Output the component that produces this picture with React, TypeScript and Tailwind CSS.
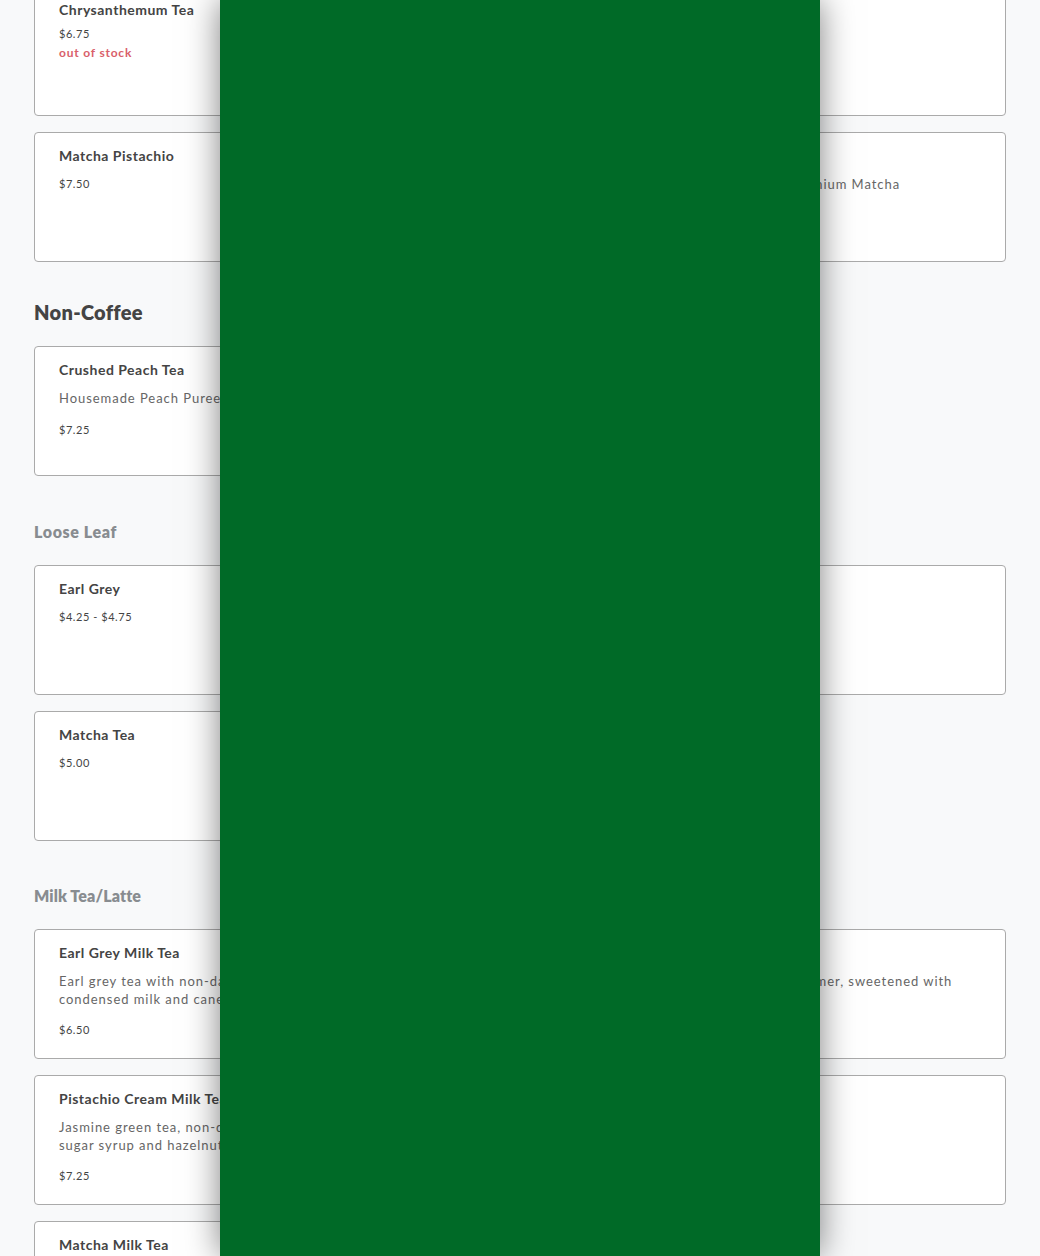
type Item = { name: string; price: string; desc?: string; stock?: boolean };

function Card({ item }: { item: Item }) {
  return (
    <div className="h-[130px] rounded border border-[#aaaaaa] bg-white px-6 pt-[15px] text-[#444444]">
      <h3 className="mb-3 h-4 whitespace-nowrap text-[14px] leading-4 font-bold tracking-[0.5px] text-[#444444]">{item.name}</h3>
      {item.desc && (
        <p className="mb-[14px] max-w-[410px] text-[13px] leading-[17.5px] tracking-[0.95px] text-[#666666]">{item.desc}</p>
      )}
      <p className={`text-[11px] leading-4 tracking-[0.55px] text-[#444444] ${item.stock ? "-mt-1" : ""}`}>{item.price}</p>
      {item.stock && <p className="mt-[3px] text-[12px] leading-4 font-bold tracking-[0.8px] text-[#d9606a]">out of stock</p>}
    </div>
  );
}

function Grid({ items }: { items: Item[] }) {
  return (
    <div className="grid grid-cols-2 gap-4">
      {items.map((item) => (
        <Card key={item.name} item={item} />
      ))}
    </div>
  );
}

export default function App() {
  return (
    <div className="relative h-screen overflow-hidden bg-[#f8f9fa] font-['Lato',sans-serif]">
      <main className="-mt-[14px] px-[34px]">
        <Grid
          items={[
            { name: "Chrysanthemum Tea", price: "$6.75", stock: true },
            { name: "Jasmine Tea", price: "$6.25" },
            { name: "Matcha Pistachio", price: "$7.50" },
            { name: "Matcha Limeade", price: "$7.25", desc: "Ceremonial Grade Limeade with Uji Premium Matcha" },
          ]}
        />
        <h2 className="mt-9 mb-5 text-[20px] leading-7 font-extrabold tracking-[0.3px] text-[#444444]">Non-Coffee</h2>
        <Grid items={[{ name: "Crushed Peach Tea", price: "$7.25", desc: "Housemade Peach Puree" }]} />
        <h2 className="mt-11 mb-[21px] text-[16px] leading-6 font-extrabold tracking-[0.6px] text-[#888c90]">Loose Leaf</h2>
        <Grid
          items={[
            { name: "Earl Grey", price: "$4.25 - $4.75" },
            { name: "Jasmine Green", price: "$4.25 - $4.75" },
            { name: "Matcha Tea", price: "$5.00" },
          ]}
        />
        <h2 className="mt-[43px] mb-[21px] text-[16px] leading-6 font-extrabold tracking-[0.1px] text-[#888c90]">Milk Tea/Latte</h2>
        <Grid
          items={[
            { name: "Earl Grey Milk Tea", price: "$6.50", desc: "Earl grey tea with non-dairy creamer, sweetened with condensed milk and cane sugar" },
            { name: "Jasmine Milk Tea", price: "$6.50", desc: "Jasmine green tea with a non-dairy creamer, sweetened with condensed milk" },
            { name: "Pistachio Cream Milk Tea", price: "$7.25", desc: "Jasmine green tea, non-dairy creamer, pistachio cream, cane sugar syrup and hazelnut cream" },
            { name: "Hazelnut Milk Tea", price: "$7.25" },
            { name: "Matcha Milk Tea", price: "$7.25" },
          ]}
        />
      </main>
      <div className="absolute inset-y-0 left-[220px] w-[600px] bg-[#006a27] shadow-[0_0_32px_rgba(0,0,0,0.5)]" />
    </div>
  );
}
